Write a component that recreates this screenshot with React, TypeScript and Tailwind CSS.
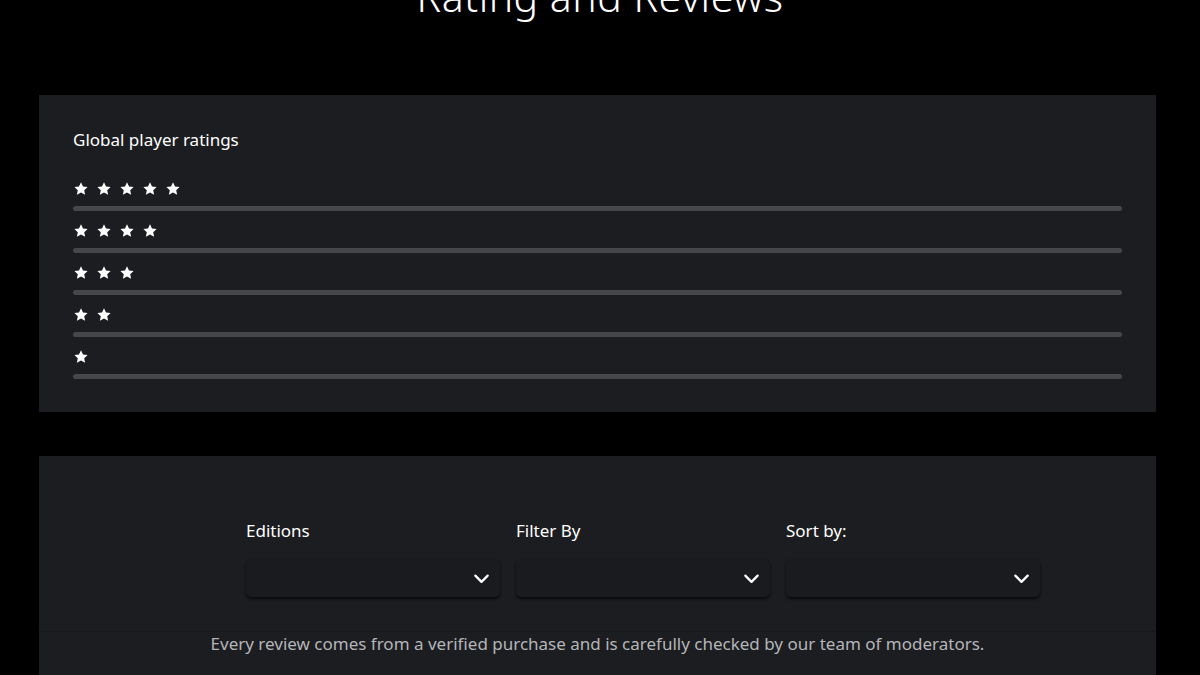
import React from 'react';

const font = { fontFamily: '"Noto Sans", "Open Sans", sans-serif' };

const Star: React.FC = () => (
    <svg viewBox="0 0 24 24" className="w-[16px] h-[16px]" fill="#ffffff">
        <path d="M12 2l3 6.3 6.9.8-5.1 4.7 1.4 6.9L12 17.2l-6.2 3.5 1.4-6.9-5.1-4.7 6.9-.8z" />
    </svg>
);

const Chevron: React.FC = () => (
    <svg viewBox="0 0 20 20" className="w-[19px] h-[19px]" fill="none" stroke="#ffffff" strokeWidth="2.4" strokeLinecap="round" strokeLinejoin="round">
        <path d="M3.5 7l6.5 6.5L16.5 7" />
    </svg>
);

const RatingRow: React.FC<{ count: number }> = ({ count }) => (
    <div className="flex flex-col">
        <div className="flex items-center gap-[7px] h-[16px]">
            {Array.from({ length: count }).map((_, i) => (
                <Star key={i} />
            ))}
        </div>
        <div className="mt-[9px] h-[5px] rounded-full bg-[#46474b]" />
    </div>
);

const Dropdown: React.FC<{ label: string }> = ({ label }) => (
    <div className="flex flex-col w-[254px]">
        <span className="text-[17px] leading-[22px] text-white">{label}</span>
        <div className="mt-[17px] h-[38px] rounded-[5px] bg-[#1a1b1e] shadow-[0_2px_3px_rgba(0,0,0,0.7)] flex items-center justify-end pr-[9px]">
            <Chevron />
        </div>
    </div>
);

export default function App() {
    return (
        <div className="h-[675px] w-full overflow-hidden bg-black text-white" style={font}>
            <div className="h-[95px] flex justify-center">
                <h1 className="text-[41px] font-light leading-none -mt-[24px] tracking-[0.5px]">Rating and Reviews</h1>
            </div>

            <section className="ml-[39px] mr-[44px] h-[317px] bg-[#1c1d21] px-[34px] pt-[34px]">
                <h2 className="text-[17px] leading-[22px] text-white">Global player ratings</h2>
                <div className="mt-[30px] flex flex-col gap-[12px]">
                    {[5, 4, 3, 2, 1].map((n) => (
                        <RatingRow key={n} count={n} />
                    ))}
                </div>
            </section>

            <section className="ml-[39px] mr-[44px] mt-[44px] h-[260px] bg-[#1c1d21] pt-[64px]">
                <div className="flex gap-[16px] pl-[207px]">
                    <Dropdown label="Editions" />
                    <Dropdown label="Filter By" />
                    <Dropdown label="Sort by:" />
                </div>
                <div className="mt-[34px] border-t border-[#17181b] pt-[1px] text-center text-[17px] leading-[22px] text-[#b4b5b8]">
                    Every review comes from a verified purchase and is carefully checked by our team of moderators.
                </div>
            </section>
        </div>
    );
}
